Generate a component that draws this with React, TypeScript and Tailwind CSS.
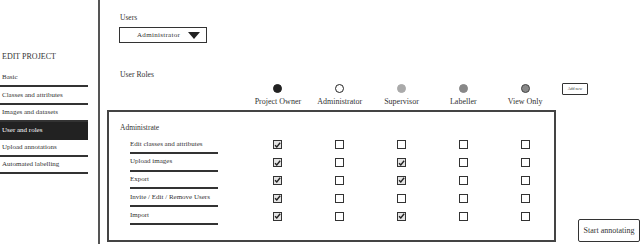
import React from 'react';

const font = { fontFamily: '"Liberation Serif", "DejaVu Serif", serif' };

const navItems = [
  'Basic',
  'Classes and attributes',
  'Images and datasets',
  'User and roles',
  'Upload annotations',
  'Automated labelling',
];

const roles = [
  { name: 'Project Owner', dot: 'bg-[#222] border-[#222]' },
  { name: 'Administrator', dot: 'bg-white border-[#222]' },
  { name: 'Supervisor', dot: 'bg-[#aaa] border-[#aaa]' },
  { name: 'Labeller', dot: 'bg-[#888] border-[#888]' },
  { name: 'View Only', dot: 'bg-[#888] border-[#444]' },
];

const permissions: { label: string; checks: boolean[] }[] = [
  { label: 'Edit classes and attributes', checks: [true, false, false, false, false] },
  { label: 'Upload images', checks: [true, false, true, false, false] },
  { label: 'Export', checks: [true, false, true, false, false] },
  { label: 'Invite / Edit / Remove Users', checks: [true, false, false, false, false] },
  { label: 'Import', checks: [true, false, true, false, false] },
];

function Checkbox({ checked }: { checked: boolean }) {
  return (
    <span
      className={`flex h-[9px] w-[9px] items-center justify-center border-[1.5px] border-[#333] ${
        checked ? 'bg-[#e4e4e4]' : 'bg-white'
      }`}
    >
      {checked && (
        <svg viewBox="0 0 10 10" className="h-[8px] w-[8px]">
          <path d="M1.5 5.2 L4 7.8 L8.8 1.8" fill="none" stroke="#222" strokeWidth="2" />
        </svg>
      )}
    </span>
  );
}

function Sidebar() {
  return (
    <div className="flex h-[244px] w-[100px] shrink-0 flex-col border-r-2 border-[#555] pr-[10px] pt-[51px]">
      <div className="mb-[7px] pl-[2px] text-[8px] leading-[12px] text-[#333]">EDIT PROJECT</div>
      {navItems.map((item) => {
        const active = item === 'User and roles';
        return (
          <div
            key={item}
            className={`flex h-[17.4px] items-center border-b-2 pl-[2px] text-[7px] ${
              active ? 'border-[#222] bg-[#222] text-white' : 'border-[#333] text-[#333]'
            }`}
          >
            {item}
          </div>
        );
      })}
    </div>
  );
}

export default function App() {
  return (
    <div className="flex h-[244px] w-[640px] overflow-hidden bg-white text-[#333]" style={font}>
      <Sidebar />
      <div className="flex flex-col pl-[7px]">
        <div className="pl-[13px] pt-[12px] text-[7.5px] leading-[12px]">Users</div>
        <div className="ml-[12px] mt-[3px] flex h-[16px] w-[88px] items-center border-[1.5px] border-[#333] pl-[17px] text-[7px]">
          <span className="tracking-[0.3px]">Administrator</span>
          <svg viewBox="0 0 12 7" className="ml-[8px] h-[7px] w-[12px]">
            <path d="M0 0 L12 0 L6 7 Z" fill="#222" />
          </svg>
        </div>
        <div className="mt-[26px] pl-[13px] text-[7.7px] leading-[12px]">User Roles</div>
        <div className="mt-[3px] flex items-start">
          <div className="w-[140px] shrink-0" />
          {roles.map((r) => (
            <div key={r.name} className="flex w-[61.8px] shrink-0 flex-col items-center">
              <span className={`h-[9px] w-[9px] rounded-full border-[1.5px] ${r.dot}`} />
              <span className="mt-[3px] whitespace-nowrap text-[8px] leading-[12px]">{r.name}</span>
            </div>
          ))}
          <div className="ml-[6px] mt-[-1px] flex h-[12px] w-[26px] items-center justify-center rounded-[1px] border-[1.5px] border-[#333] text-[4px]">
            Add new
          </div>
        </div>
        <div className="mt-[2px] flex items-end">
          <div className="h-[132px] w-[449px] border-2 border-[#444] pt-[10px]">
            <div className="pl-[11px] text-[7.5px] leading-[12px]">Administrate</div>
            <div className="mt-[2px]">
              {permissions.map((p) => (
                <div key={p.label} className="flex h-[17.8px] items-center">
                  <div className="ml-[21px] mr-[29px] flex h-full w-[88px] shrink-0 items-center whitespace-nowrap border-b-2 border-[#333] text-[7px]">
                    {p.label}
                  </div>
                  {p.checks.map((c, i) => (
                    <div key={i} className="flex w-[61.8px] shrink-0 justify-center">
                      <Checkbox checked={c} />
                    </div>
                  ))}
                </div>
              ))}
            </div>
          </div>
          <div className="ml-[22px] flex h-[23px] w-[62px] items-center justify-center rounded-[2px] border-[1.5px] border-[#333] text-[8px]">
            Start annotating
          </div>
        </div>
      </div>
    </div>
  );
}
